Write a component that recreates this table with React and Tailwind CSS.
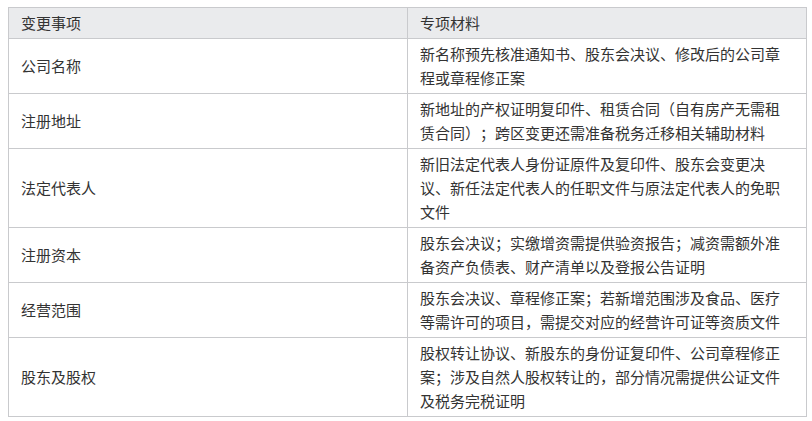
import React from 'react';

const rows = [
  ['公司名称', '新名称预先核准通知书、股东会决议、修改后的公司章程或章程修正案'],
  ['注册地址', '新地址的产权证明复印件、租赁合同（自有房产无需租赁合同）；跨区变更还需准备税务迁移相关辅助材料'],
  ['法定代表人', '新旧法定代表人身份证原件及复印件、股东会变更决议、新任法定代表人的任职文件与原法定代表人的免职文件'],
  ['注册资本', '股东会决议；实缴增资需提供验资报告；减资需额外准备资产负债表、财产清单以及登报公告证明'],
  ['经营范围', '股东会决议、章程修正案；若新增范围涉及食品、医疗等需许可的项目，需提交对应的经营许可证等资质文件'],
  ['股东及股权', '股权转让协议、新股东的身份证复印件、公司章程修正案；涉及自然人股权转让的，部分情况需提供公证文件及税务完税证明'],
];

const cell = 'border-r border-b border-[#c9cacd] px-3 py-[3px]';

const App = () => {
  return (
    <div className="min-h-screen bg-white pt-[7px] pl-[8px]">
      <div
        className="w-[799px] grid grid-cols-[399px_399px] border-l border-t border-[#c9cacd] text-[15px] leading-[24px] text-[#333333] [text-spacing-trim:space-all]"
        style={{ fontFamily: '"Microsoft YaHei", "Noto Sans CJK SC", sans-serif' }}
      >
        {/* header */}
        <div className={`${cell} bg-[#eaebed]`}>变更事项</div>
        <div className={`${cell} bg-[#eaebed]`}>专项材料</div>

        {rows.map(([item, material]) => (
          <React.Fragment key={item}>
            <div className={`${cell} flex items-center`}>{item}</div>
            <div className={cell}>{material}</div>
          </React.Fragment>
        ))}
      </div>
    </div>
  );
};

export default App;
